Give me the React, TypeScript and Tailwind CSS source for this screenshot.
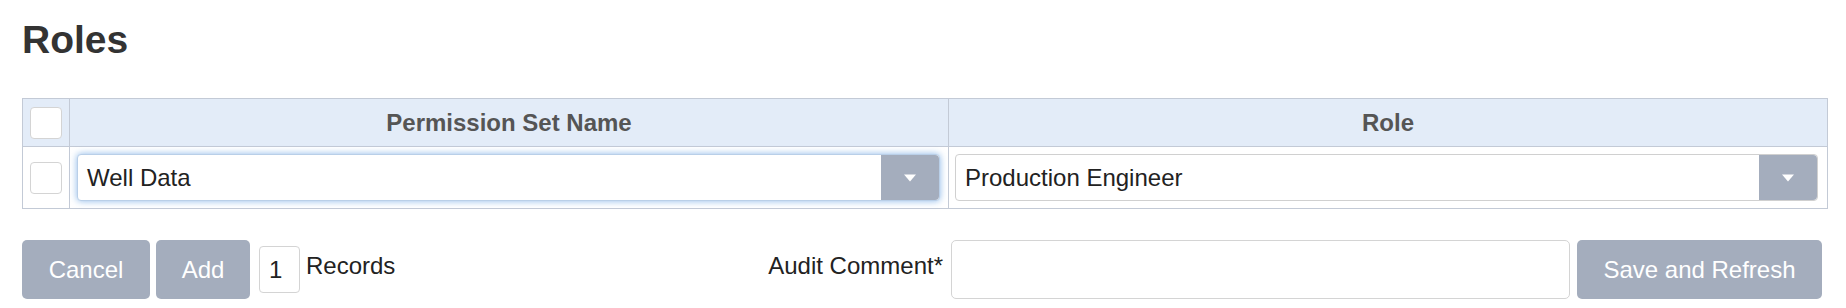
import React from 'react';

const Caret: React.FC = () => (
  <svg width="14" height="8" viewBox="0 0 14 8">
    <path d="M1 0.5 L13 0.5 L7 7.5 Z" fill="#ffffff" />
  </svg>
);

const Checkbox: React.FC = () => (
  <div className="w-[32px] h-[32px] rounded-[4px] border border-[#d4d4d4] bg-white" />
);

const Select: React.FC<{ value: string; focused?: boolean }> = ({ value, focused }) => (
  <div
    className={
      focused
        ? 'flex h-[47px] w-full items-stretch rounded-[4px] border border-[#b9cfe8] bg-white shadow-[0_0_7px_rgba(102,160,225,0.75)]'
        : 'flex h-[47px] w-full items-stretch rounded-[4px] border border-[#d0d0d0] bg-white'
    }
  >
    <div className="flex flex-1 items-center pl-[9px] text-[24px] leading-none text-[#222]">{value}</div>
    <div className="flex w-[58px] items-center justify-center rounded-r-[4px] bg-[#a4adbd]">
      <Caret />
    </div>
  </div>
);

const App: React.FC = () => {
  return (
    <div className="min-h-[308px] bg-white pl-[22px] pt-[20px] font-['Liberation_Sans',Arial,sans-serif]">
      <h1 className="text-[39px] font-bold leading-none text-[#333]">Roles</h1>

      <div className="mt-[39px] w-[1806px] border border-[#c3cad6]">
        <div className="flex h-[48px] border-b border-[#c3cad6] bg-[#e3ecf8]">
          <div className="flex w-[46px] items-center justify-center">
            <Checkbox />
          </div>
          <div className="flex flex-1 items-center justify-center border-l border-[#c3cad6] text-[24px] font-bold text-[#555]">
            Permission Set Name
          </div>
          <div className="flex flex-1 items-center justify-center border-l border-[#c3cad6] text-[24px] font-bold text-[#555]">
            Role
          </div>
        </div>
        <div className="flex h-[61px] bg-white">
          <div className="flex w-[46px] items-center justify-center">
            <Checkbox />
          </div>
          <div className="flex flex-1 items-center border-l border-[#c3cad6] pl-[7px] pr-[8px]">
            <Select value="Well Data" focused />
          </div>
          <div className="flex flex-1 items-center border-l border-[#c3cad6] pl-[6px] pr-[9px]">
            <Select value="Production Engineer" />
          </div>
        </div>
      </div>

      <div className="mt-[31px] flex h-[59px] w-[1800px] items-center text-[24px] text-[#222]">
        <button className="h-[59px] w-[128px] rounded-[5px] bg-[#a4adbd] text-white">Cancel</button>
        <button className="ml-[6px] h-[59px] w-[94px] rounded-[5px] bg-[#a4adbd] text-white">Add</button>
        <div className="ml-[9px] flex h-[47px] w-[41px] items-center rounded-[4px] border border-[#d4d4d4] pl-[9px]">
          1
        </div>
        <span className="ml-[6px] mt-[14px] self-start leading-none">Records</span>

        <div className="ml-auto flex h-[59px] items-stretch">
          <span className="mt-[14px] self-start leading-none">Audit Comment*</span>
          <div className="ml-[8px] h-[59px] w-[619px] rounded-[5px] border border-[#d4d4d4] bg-white" />
          <button className="ml-[7px] h-[59px] w-[245px] rounded-[5px] bg-[#a4adbd] text-white">
            Save and Refresh
          </button>
        </div>
      </div>
    </div>
  );
};

export default App;
